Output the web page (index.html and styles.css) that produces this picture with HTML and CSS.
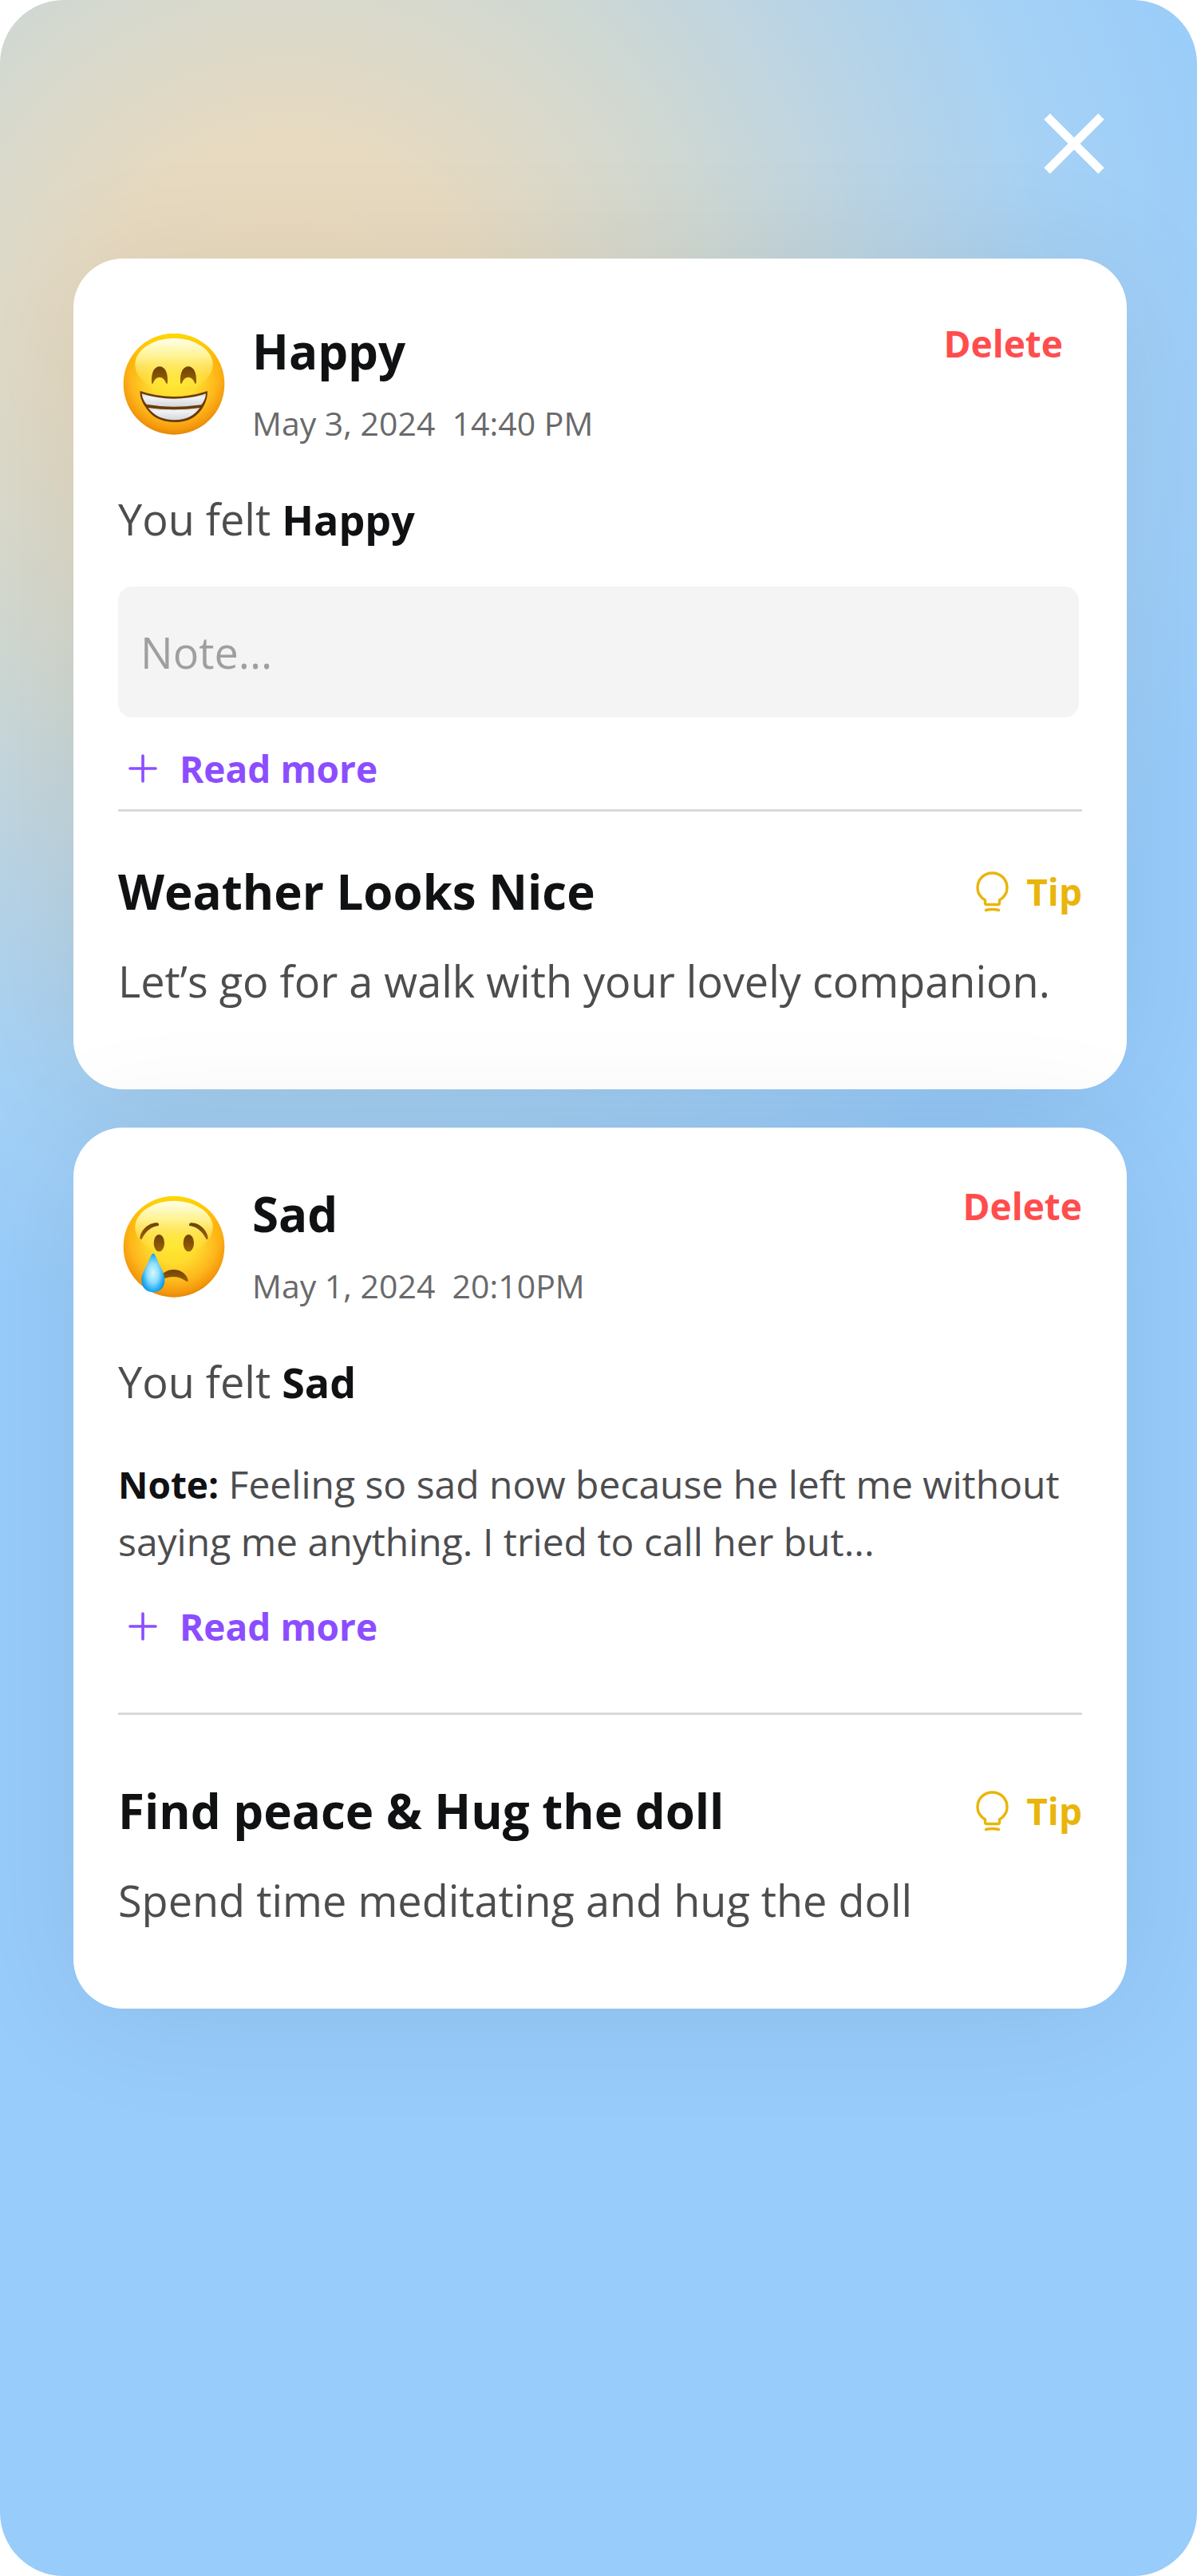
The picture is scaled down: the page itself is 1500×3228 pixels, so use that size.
FILE: index.html
```html
<!DOCTYPE html>
<html lang="en">
<head>
  <meta charset="utf-8">
  <meta name="viewport" content="width=device-width, initial-scale=1">
  <title>Mood journal</title>
  <link rel="stylesheet" href="styles.css">
</head>
<body>
  <svg class="defs" width="0" height="0" aria-hidden="true">
    <defs>
      <radialGradient id="face" cx="0.5" cy="0.42" r="0.6">
        <stop offset="0" stop-color="#ffea2e"/>
        <stop offset="0.4" stop-color="#ffdc2e"/>
        <stop offset="0.72" stop-color="#fdb61c"/>
        <stop offset="0.88" stop-color="#f59a0c"/>
        <stop offset="1" stop-color="#dd8108"/>
      </radialGradient>
      <linearGradient id="rim" x1="0" y1="0" x2="0" y2="1">
        <stop offset="0" stop-color="#ffd900"/>
        <stop offset="0.3" stop-color="#ffb400" stop-opacity="0.5"/>
        <stop offset="0.5" stop-color="#ffb400" stop-opacity="0"/>
      </linearGradient>
      <linearGradient id="shine" x1="0" y1="0" x2="0" y2="1">
        <stop offset="0" stop-color="#fffef0"/>
        <stop offset="0.35" stop-color="#fffba8" stop-opacity="0.85"/>
        <stop offset="1" stop-color="#fff04a" stop-opacity="0"/>
      </linearGradient>
      <linearGradient id="brown" x1="0" y1="0" x2="0" y2="1">
        <stop offset="0" stop-color="#6e4108"/>
        <stop offset="1" stop-color="#9a6206"/>
      </linearGradient>
      <linearGradient id="teeth" x1="0" y1="0" x2="0" y2="1">
        <stop offset="0" stop-color="#d5d7db"/>
        <stop offset="0.3" stop-color="#f1f2f3"/>
        <stop offset="1" stop-color="#d3d6dc"/>
      </linearGradient>
      <radialGradient id="tear" cx="0.5" cy="0.5" r="0.55">
        <stop offset="0" stop-color="#d4f8ff"/>
        <stop offset="0.45" stop-color="#8fe0ff"/>
        <stop offset="0.8" stop-color="#2bb0f4"/>
        <stop offset="1" stop-color="#0f93e3"/>
      </radialGradient>
      <symbol id="head" viewBox="23 32 420 420">
        <circle cx="233" cy="243" r="190" fill="url(#face)"/>
        <circle cx="233" cy="243" r="190" fill="url(#rim)"/>
        <ellipse cx="233" cy="170" rx="146" ry="100" fill="url(#shine)"/>
      </symbol>
      <symbol id="bulb" viewBox="0 0 41 51">
        <path d="M11.5 36C5 32 2 27 2 20.5C2 10 10 2 20.5 2S39 10 39 20.500C39 27 36 32 29.500 36V39.500Q29.500 41.500 27.500 41.500H13.500Q11.500 41.500 11.500 39.500Z" fill="none" stroke="currentColor" stroke-width="3.400" stroke-linejoin="round"/>
        <path d="M12.500 48.500Q20.500 46.500 28.500 48.500" fill="none" stroke="currentColor" stroke-width="3.400" stroke-linecap="round"/>
      </symbol>
      <symbol id="plus" viewBox="0 0 36 36">
        <path d="M18 2V34M2 18H34" fill="none" stroke="currentColor" stroke-width="3.600" stroke-linecap="round"/>
      </symbol>
    </defs>
  </svg>

  <main class="screen">
    <header class="topbar">
      <button class="close" type="button" aria-label="Close">
        <svg class="close-icon" viewBox="0 0 75 75" aria-hidden="true">
          <path d="M4 4L71 71M71 4L4 71" stroke="currentColor" stroke-width="10.500" fill="none"/>
        </svg>
      </button>
    </header>

    <section class="entries">
      <article class="card">
        <header class="card-head card-head-inset">
          <svg class="emoji" viewBox="23 32 420 420" role="img" aria-label="Grinning face">
            <use href="#head" x="23" y="32" width="420" height="420"/>
            <g fill="url(#brown)">
              <path d="M149 236C147 200 159 177 179 177S211 200 209 236Q208 246 203 239C198 226 190 217 179 217S160 226 155 239Q150 246 149 236Z"/>
              <path d="M257 236C255 200 267 177 287 177S319 200 317 236Q316 246 311 239C306 226 298 217 287 217S268 226 263 239Q258 246 257 236Z"/>
            </g>
            <path d="M106 269Q168 290 232 290T358 269C362 290 348 330 325 352C300 378 268 386 236 386C200 386 165 375 142 350C116 322 103 290 106 269Z" fill="#6b3a05"/>
            <path d="M112 279Q172 298 232 298T353 279C352 295 345 310 336 321Q284 328 233 328T130 319C120 308 114 294 112 279Z" fill="url(#teeth)"/>
            <path d="M136 332Q184 339 233 339T330 332C312 360 278 378 236 378C192 378 158 362 136 332Z" fill="url(#teeth)"/>
          </svg>
          <div class="card-title">
            <h2 class="heading">Happy</h2>
            <time class="date" datetime="2024-05-03T14:40">May 3, 2024&nbsp; 14:40 PM</time>
          </div>
          <button class="delete" type="button">Delete</button>
        </header>
        <p class="text">You felt <strong>Happy</strong></p>
        <input class="note-input" type="text" placeholder="Note..." aria-label="Note">
        <button class="more" type="button">
          <svg class="plus" aria-hidden="true"><use href="#plus"/></svg>Read more
        </button>
        <hr class="rule">
        <div class="tip-row">
          <h2 class="heading">Weather Looks Nice</h2>
          <span class="tip"><svg class="bulb" aria-hidden="true"><use href="#bulb"/></svg>Tip</span>
        </div>
        <p class="text tip-text">Let’s go for a walk with your lovely companion.</p>
      </article>

      <article class="card card-read">
        <header class="card-head">
          <svg class="emoji" viewBox="23 32 420 420" role="img" aria-label="Crying face">
            <use href="#head" x="23" y="32" width="420" height="420"/>
            <g fill="url(#brown)">
              <path d="M105 210C108 180 138 152 170 153Q179 156 175 164C150 167 128 182 113 212Q107 220 105 210Z"/>
              <path d="M361 210C358 180 328 152 296 153Q287 156 291 164C316 167 338 182 353 212Q359 220 361 210Z"/>
              <ellipse cx="177" cy="229" rx="20" ry="32"/>
              <ellipse cx="288" cy="229" rx="20" ry="32"/>
              <path d="M190 345C205 332 220 329 233 329C260 329 280 346 286 368Q287 378 278 372C262 361 248 356 230 356C215 356 200 360 190 366Z"/>
            </g>
            <path d="M155 268C163 268 165 285 178 310C190 333 198 348 198 368C198 396 180 414 155 414S111 396 111 368C111 348 120 333 132 310C145 285 147 268 155 268Z" fill="url(#tear)"/>
          </svg>
          <div class="card-title">
            <h2 class="heading">Sad</h2>
            <time class="date" datetime="2024-05-01T20:10">May 1, 2024&nbsp; 20:10PM</time>
          </div>
          <button class="delete" type="button">Delete</button>
        </header>
        <p class="text">You felt <strong>Sad</strong></p>
        <p class="note"><strong>Note:</strong> Feeling so sad now because he left me without saying me anything. I tried to call her but...</p>
        <button class="more" type="button">
          <svg class="plus" aria-hidden="true"><use href="#plus"/></svg>Read more
        </button>
        <hr class="rule">
        <div class="tip-row">
          <h2 class="heading">Find peace &amp; Hug the doll</h2>
          <span class="tip"><svg class="bulb" aria-hidden="true"><use href="#bulb"/></svg>Tip</span>
        </div>
        <p class="text tip-text">Spend time meditating and hug the doll</p>
      </article>
    </section>
  </main>
</body>
</html>
```
FILE: styles.css
```css
* {
  box-sizing: border-box;
}

body {
  margin: 0;
  background: #fff;
  color: #4d4d4f;
  font-family: "Open Sans", "Noto Sans", sans-serif;
}

h2,
p {
  margin: 0;
}

button {
  padding: 0;
  border: 0;
  background: none;
  font-family: inherit;
  cursor: pointer;
}

.defs {
  position: absolute;
}

.screen {
  min-height: 100vh;
  padding: 142px 88px 100px 92px;
  overflow: hidden;
  border-radius: 80px;
  background:
    radial-gradient(1250px 1250px at 24% 420px,
      #ebdabb 0%,
      #e7dac1 20%,
      #d0d8d2 42%,
      #bad4e5 60%,
      #a5d1f5 78%,
      rgba(152, 204, 251, 0) 100%),
    #98ccfb;
}

.topbar {
  display: flex;
  justify-content: flex-end;
  padding-right: 28px;
}

.close {
  display: flex;
  color: #fff;
}

.close-icon {
  width: 76px;
  height: 76px;
}

.entries {
  display: flex;
  flex-direction: column;
  gap: 48px;
  margin-top: 106px;
}

.card {
  display: flex;
  flex-direction: column;
  padding: 80px 56px 100px;
  border-radius: 62px;
  background: #fff;
  box-shadow: 0 8px 160px rgba(0, 0, 0, 0.08);
}

.card-read {
  padding-top: 72px;
}

.card-head {
  display: flex;
  align-items: center;
  gap: 28px;
}

.card-head-inset {
  padding-right: 24px;
}

.emoji {
  width: 140px;
  height: 140px;
}

.card-title {
  display: flex;
  flex: 1;
  flex-direction: column;
  gap: 26px;
}

.heading {
  color: #101113;
  font-size: 60px;
  font-weight: 700;
  line-height: 72px;
}

.date {
  color: #69696b;
  font-size: 41px;
  line-height: 56px;
}

.delete {
  align-self: flex-start;
  color: #ff4d4d;
  font-size: 46px;
  font-weight: 700;
  line-height: 52px;
}

.text {
  margin-top: 56px;
  font-size: 54px;
  line-height: 72px;
}

.text strong {
  color: #101113;
  font-size: 52px;
}

.note strong {
  color: #101113;
  font-size: 46px;
}

.note-input {
  width: auto;
  height: 164px;
  margin: 48px 4px 0 0;
  padding: 0 28px;
  border: 0;
  border-radius: 18px;
  background: #f4f4f4;
  color: #4d4d4f;
  font-family: inherit;
  font-size: 54px;
}

.note-input::placeholder {
  color: #9f9f9f;
  opacity: 1;
}

.note {
  margin-top: 56px;
  font-size: 48px;
  line-height: 72px;
}

.more {
  display: flex;
  align-items: center;
  align-self: flex-start;
  gap: 28px;
  margin-top: 32px;
  padding-left: 13px;
  color: #8c4dff;
  font-size: 46px;
  font-weight: 700;
  line-height: 64px;
}

.note + .more {
  margin-top: 38px;
}

.plus {
  width: 36px;
  height: 36px;
}

.rule {
  width: 100%;
  height: 3px;
  margin: 19px 0 0;
  border: 0;
  background: #d9d9d9;
}

.card-read .rule {
  margin-top: 76px;
}

.tip-row {
  display: flex;
  align-items: center;
  justify-content: space-between;
  margin-top: 64px;
}

.card-read .tip-row {
  margin-top: 84px;
}

.tip {
  display: flex;
  align-items: center;
  gap: 22px;
  color: #e9b50b;
  font-size: 46px;
  font-weight: 700;
  line-height: 64px;
}

.bulb {
  width: 41px;
  height: 51px;
}

.tip-text {
  margin-top: 40px;
}
```
